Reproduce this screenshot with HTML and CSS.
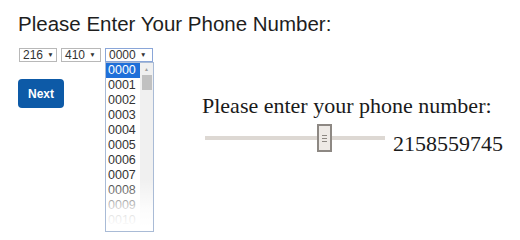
FILE: index.html
```html
<!DOCTYPE html>
<html>
<head>
<meta charset="utf-8">
<link rel="stylesheet" href="styles.css">
</head>
<body>
<h1 class="title">Please Enter Your Phone Number:</h1>
<div class="content">
  <div class="left">
    <div class="selects">
      <div class="sel sel-a">216 <span class="arrow">▼</span></div>
      <div class="sel sel-b">410 <span class="arrow">▼</span></div>
      <div class="sel-wrap">
        <div class="sel sel-open">0000 <span class="arrow">▼</span></div>
        <div class="list">
          <div class="options">
            <div class="opt opt-active">0000</div>
            <div class="opt">0001</div>
            <div class="opt">0002</div>
            <div class="opt">0003</div>
            <div class="opt">0004</div>
            <div class="opt">0005</div>
            <div class="opt">0006</div>
            <div class="opt">0007</div>
            <div class="opt">0008</div>
            <div class="opt">0009</div>
            <div class="opt">0010</div>
          </div>
          <div class="scrollbar">
            <div class="sb-up">▲</div>
            <div class="sb-thumb"></div>
          </div>
          <div class="fade"></div>
        </div>
      </div>
    </div>
    <button class="next">Next</button>
  </div>
  <div class="right">
    <div class="label">Please enter your phone number:</div>
    <div class="slider-row">
      <div class="slider">
        <div class="track"></div>
        <div class="thumb"><span></span><span></span><span></span></div>
      </div>
      <div class="number">2158559745</div>
    </div>
  </div>
</div>
</body>
</html>
```
FILE: styles.css
```css
html {
  height: 100%;
  background: #ffffff;
}
body {
  margin: 0;
  min-height: 100%;
  box-sizing: border-box;
  padding: 12px 0 0 18px;
  font-family: "Liberation Sans", Arial, sans-serif;
  color: #222;
  background: #ffffff;
}
.title {
  margin: 0;
  font-size: 20.5px;
  font-weight: normal;
  line-height: 24px;
  color: #1e1e1e;
}
.content {
  display: flex;
  margin-top: 12px;
}
.left {
  width: 183px;
  padding-left: 1px;
}
.selects {
  display: flex;
  gap: 4px;
  align-items: flex-start;
}
.sel {
  box-sizing: border-box;
  height: 14px;
  border: 1px solid #b8b8b8;
  font-size: 12px;
  line-height: 12px;
  padding: 0 0 0 3px;
  color: #333;
  background: #fff;
  white-space: nowrap;
}
.sel-a { width: 38px; }
.sel-b { width: 40px; }
.arrow {
  font-size: 6.5px;
  vertical-align: 2px;
  margin-left: 1px;
}
.sel-wrap {
  position: relative;
}
.sel-open {
  border-color: #8aa6d8;
  width: 48px;
}
.list {
  position: absolute;
  left: 0;
  top: 14px;
  width: 49px;
  height: 170px;
  box-sizing: border-box;
  border: 1px solid #a9bbd6;
  background: #fff;
  display: flex;
  overflow: hidden;
}
.options {
  flex: 1;
}
.opt {
  height: 15px;
  line-height: 15px;
  font-size: 12.5px;
  padding-left: 2px;
  color: #333;
}
.opt-active {
  background: #1e6fd9;
  color: #fff;
}
.scrollbar {
  width: 13px;
  background: #f0f0f0;
  display: flex;
  flex-direction: column;
  align-items: center;
}
.sb-up {
  font-size: 5px;
  color: #a0a0a0;
  height: 12px;
  line-height: 12px;
}
.sb-thumb {
  width: 10px;
  height: 15px;
  background: #c1c1c1;
}
.fade {
  position: absolute;
  left: -2px;
  right: -2px;
  bottom: -2px;
  height: 54px;
  background: linear-gradient(to bottom, rgba(255,255,255,0), rgba(255,255,255,0.8) 55%, #fff 88%);
}
.next {
  display: block;
  margin-top: 17px;
  margin-left: -1px;
  width: 46px;
  height: 29px;
  border: none;
  border-radius: 4px;
  background: #0d5aa7;
  color: #fff;
  font-family: "Liberation Sans", Arial, sans-serif;
  font-weight: bold;
  font-size: 12px;
  padding: 0;
}
.right {
  padding-top: 46px;
  font-family: "Liberation Serif", "Times New Roman", serif;
  color: #1a1a1a;
}
.label {
  font-size: 22px;
  line-height: 24px;
}
.slider-row {
  display: flex;
  align-items: flex-end;
  margin-top: 6px;
}
.slider {
  position: relative;
  width: 180px;
  height: 28px;
  margin-left: 3px;
}
.track {
  position: absolute;
  left: 0;
  right: 0;
  top: 12px;
  height: 4px;
  background: #ddd8d3;
}
.thumb {
  position: absolute;
  left: 112px;
  top: 0;
  width: 11px;
  height: 24px;
  border: 2px solid #8d8883;
  background: #eeeae6;
  display: flex;
  flex-direction: column;
  justify-content: center;
  align-items: center;
  gap: 2px;
}
.thumb span {
  width: 5px;
  height: 1px;
  background: #8d8883;
}
.number {
  font-size: 22px;
  line-height: 22px;
  margin-left: 8px;
  margin-bottom: -3px;
}
```
